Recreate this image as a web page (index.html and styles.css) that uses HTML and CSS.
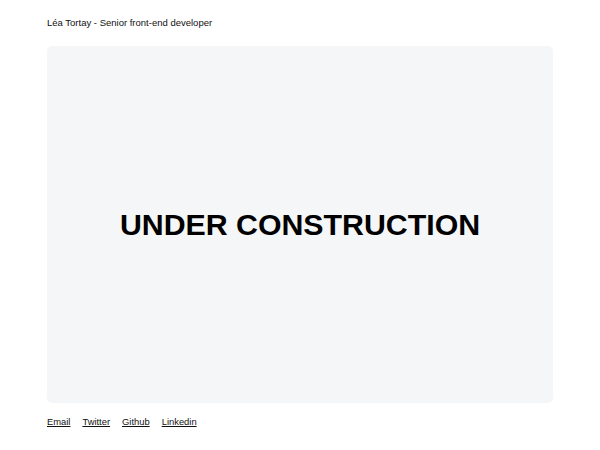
FILE: index.html
```html
<!DOCTYPE html>
<html lang="fr">
<head>
<meta charset="utf-8">
<title>Léa Tortay</title>
<link rel="stylesheet" href="styles.css">
</head>
<body>
<div class="page">
  <header class="header">Léa Tortay - Senior front-end developer</header>
  <main class="panel">
    <h1 class="title">UNDER CONSTRUCTION</h1>
  </main>
  <footer class="footer">
    <a href="#">Email</a>
    <a href="#">Twitter</a>
    <a href="#">Github</a>
    <a href="#">Linkedin</a>
  </footer>
</div>
</body>
</html>
```
FILE: styles.css
```css
html, body {
  margin: 0;
  padding: 0;
  background: #fff;
}
body {
  font-family: "Liberation Sans", Arial, sans-serif;
  color: #111;
}
.page {
  display: flex;
  flex-direction: column;
  width: 506px;
  margin: 0 auto;
  padding-top: 16px;
  height: 450px;
  box-sizing: border-box;
}
.header {
  font-size: 9.5px;
  line-height: 13px;
  height: 13px;
  margin-bottom: 17px;
}
.panel {
  height: 357px;
  background: #f5f6f8;
  border-radius: 5px;
  display: flex;
  align-items: center;
  justify-content: center;
}
.title {
  margin: 0;
  font-size: 30.3px;
  font-weight: 700;
  color: #000;
  letter-spacing: 0;
}
.footer {
  display: flex;
  gap: 12px;
  margin-top: 12px;
  font-size: 9.4px;
  line-height: 13px;
}
.footer a {
  color: #111;
  text-decoration: underline;
}
```
